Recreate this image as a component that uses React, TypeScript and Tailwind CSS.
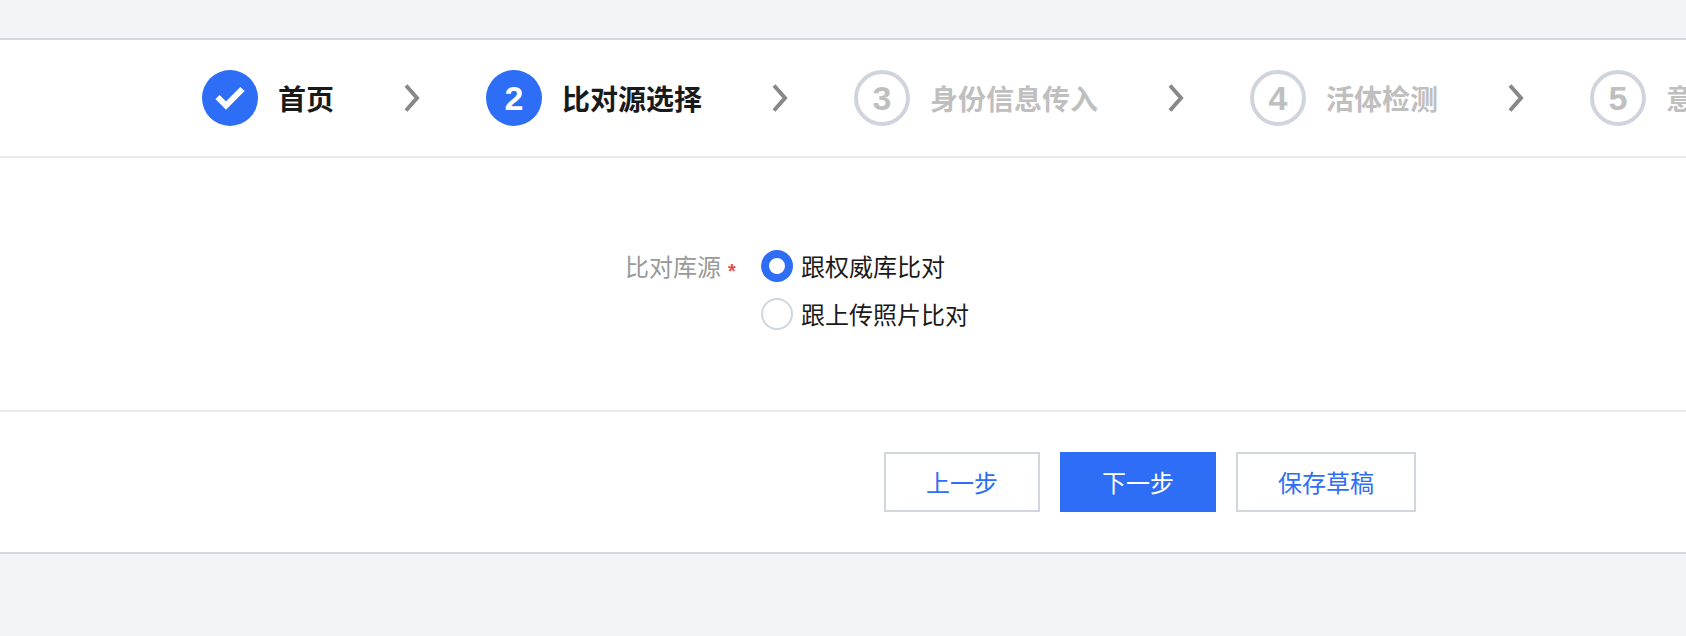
import { ReactNode } from "react";

const font = "font-['Noto_Sans_CJK_SC','Liberation_Sans',sans-serif]";

function Chevron() {
  return (
    <svg width="18" height="30" viewBox="0 0 18 30" fill="none" className="shrink-0">
      <path d="M2 2.5 L13 15 L2 27.5" stroke="#888888" strokeWidth="4" />
    </svg>
  );
}

function Step({
  circle,
  label,
  state,
  className,
}: {
  circle: ReactNode;
  label: string;
  state: "done" | "todo";
  className: string;
}) {
  const active = state === "done";
  return (
    <div className={`flex shrink-0 items-center ${className}`}>
      <div
        className={
          active
            ? "flex h-14 w-14 shrink-0 items-center justify-center rounded-full bg-[#2e6df6] text-[34px] font-bold text-white"
            : "flex h-14 w-14 shrink-0 items-center justify-center rounded-full border-[4px] border-[#d0d5dd] text-[34px] font-bold text-[#bfbfbf]"
        }
      >
        <span className="font-['Liberation_Sans',sans-serif] leading-none">{circle}</span>
      </div>
      <span
        className={`ml-5 whitespace-nowrap text-[28px] leading-[40px] font-bold ${
          active ? "text-[#1a1a1a]" : "text-[#bfbfbf]"
        }`}
      >
        {label}
      </span>
    </div>
  );
}

export default function App() {
  return (
    <div className={`flex h-[636px] w-[1686px] flex-col overflow-hidden bg-[#f2f4f8] pt-[38px] ${font}`}>
      <div className="flex h-[516px] flex-col border-y-2 border-[#d2d6df] bg-white">
        <div className="flex h-[118px] items-center overflow-hidden border-b-2 border-[#e8e9ee] pl-[202px]">
          <Step
            state="done"
            label="首页"
            className="w-[202px]"
            circle={
              <svg width="30" height="24" viewBox="0 0 30 24" fill="none" className="block">
                <path d="M2.5 11 L11 19.5 L27.5 3" stroke="white" strokeWidth="6" />
              </svg>
            }
          />
          <Chevron />
          <Step state="done" label="比对源选择" circle="2" className="ml-[64px] w-[286px]" />
          <Chevron />
          <Step state="todo" label="身份信息传入" circle="3" className="ml-[64px] w-[314px]" />
          <Chevron />
          <Step state="todo" label="活体检测" circle="4" className="ml-[64px] w-[258px]" />
          <Chevron />
          <Step state="todo" label="意愿核身" circle="5" className="ml-[64px]" />
        </div>
        <div className="flex h-[254px] border-b-2 border-[#e8e9ee] pt-[92px] pl-[625px]">
          <div className="flex h-8 w-[136px] shrink-0 items-center text-2xl leading-8 text-[#999999]">
            比对库源
            <span className="mt-[10px] ml-[7px] font-['Liberation_Sans',sans-serif] text-[20px] leading-none font-bold text-[#e0524f]">
              *
            </span>
          </div>
          <div className="flex flex-col gap-4">
            <label className="flex h-8 items-center gap-2 text-2xl leading-8 text-[#1a1a1a]">
              <span className="h-8 w-8 rounded-full border-8 border-[#2e6df6] bg-white" />
              跟权威库比对
            </label>
            <label className="flex h-8 items-center gap-2 text-2xl leading-8 text-[#1a1a1a]">
              <span className="h-8 w-8 rounded-full border-2 border-[#cfd5de] bg-white" />
              跟上传照片比对
            </label>
          </div>
        </div>
        <div className="flex gap-5 pt-10 pl-[884px]">
          <button className="h-[60px] w-[156px] border-2 border-[#d2d6df] bg-white text-2xl text-[#2e6df6]">
            上一步
          </button>
          <button className="h-[60px] w-[156px] bg-[#2e6df6] text-2xl text-white">下一步</button>
          <button className="h-[60px] w-[180px] border-2 border-[#d2d6df] bg-white text-2xl text-[#2e6df6]">
            保存草稿
          </button>
        </div>
      </div>
    </div>
  );
}
